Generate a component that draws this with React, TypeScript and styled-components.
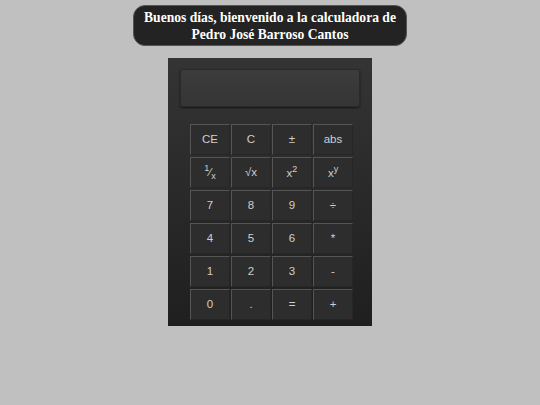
import React from "react";
import styled, { createGlobalStyle } from "styled-components";

const Global = createGlobalStyle`
  html, body {
    margin: 0;
    padding: 0;
    background: #c0c0c0;
  }
`;

const Page = styled.div`
  display: flex;
  flex-direction: column;
  align-items: center;
  padding-top: 5px;
`;

const Banner = styled.h1`
  margin: 0;
  padding: 3px 10px 2px;
  background: #232323;
  border: 1px solid #555;
  border-radius: 12px;
  color: #fff;
  font-family: "Liberation Serif", serif;
  font-weight: bold;
  font-size: 13.6px;
  line-height: 17px;
  text-align: center;
  white-space: nowrap;
`;

const Body = styled.div`
  margin-top: 12px;
  width: 204px;
  height: 268px;
  box-sizing: border-box;
  padding: 11px 12px 0;
  background: linear-gradient(#343434, #1f1f1f);
`;

const Display = styled.div`
  height: 38px;
  box-sizing: border-box;
  border-radius: 3px;
  background: linear-gradient(#3c3c3c, #353535);
  border: 1px solid #2a2a2a;
  box-shadow: 0 1px 2px rgba(0, 0, 0, 0.6);
`;

const Keys = styled.div`
  margin: 17px 0 0 10px;
  display: grid;
  grid-template-columns: repeat(4, 40px);
  grid-auto-rows: 31px;
  column-gap: 1px;
  row-gap: 2px;
`;

const Key = styled.button`
  box-sizing: border-box;
  padding: 0;
  background: #2d2d2d;
  border: 1px solid;
  border-color: #555 #262626 #262626 #555;
  color: #cfcfcf;
  font-family: "Liberation Sans", Arial, sans-serif;
  font-size: 11.5px;
  line-height: 1;
  cursor: pointer;

  sup {
    font-size: 9px;
    vertical-align: 5px;
  }
  sub {
    font-size: 9px;
    vertical-align: -3px;
  }
`;

const keys: React.ReactNode[] = [
  "CE", "C", "±", "abs",
  <><sup>1</sup>⁄<sub>x</sub></>, "√x", <>x<sup>2</sup></>, <>x<sup>y</sup></>,
  "7", "8", "9", "÷",
  "4", "5", "6", "*",
  "1", "2", "3", "-",
  "0", ".", "=", "+",
];

export default function App() {
  return (
    <Page>
      <Global />
      <Banner>
        Buenos días, bienvenido a la calculadora de
        <br />
        Pedro José Barroso Cantos
      </Banner>
      <Body>
        <Display />
        <Keys>
          {keys.map((k, i) => (
            <Key key={i}>{k}</Key>
          ))}
        </Keys>
      </Body>
    </Page>
  );
}
